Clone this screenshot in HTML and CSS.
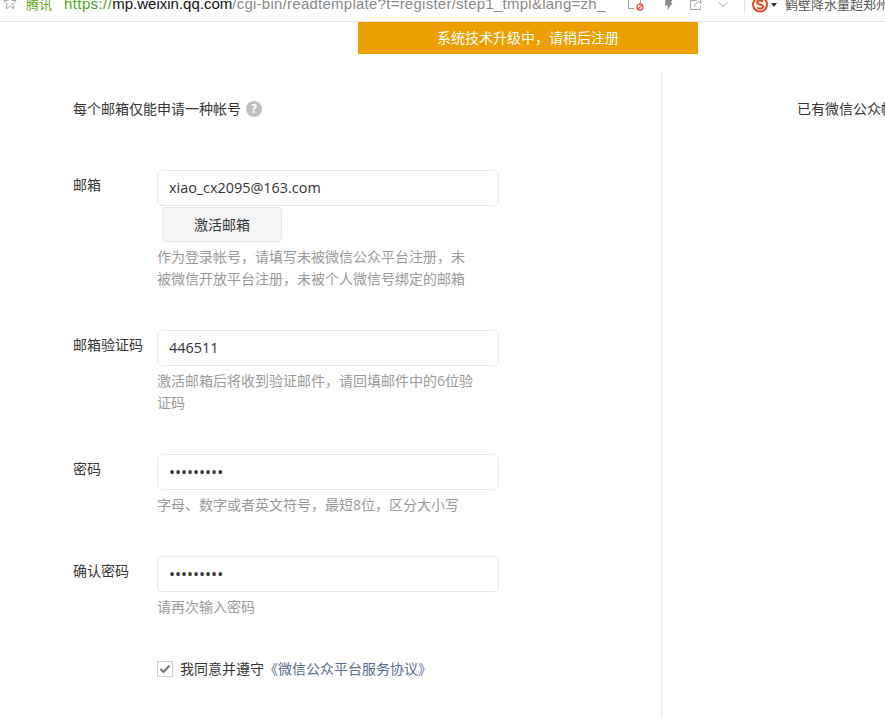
FILE: index.html
```html
<!DOCTYPE html>
<html lang="zh-CN">
<head>
<meta charset="utf-8">
<title>注册</title>
<link rel="stylesheet" href="styles.css">
</head>
<body>
<header class="browser-bar">
  <svg class="star" width="14" height="10" viewBox="0 0 14 10"><path d="M0.700 0.500H5.200L7 -4L8.800 0.500H13.300L9.700 3.600L11 9L7 6.200L3 9L4.300 3.600Z" fill="none" stroke="#a8a8a8"/></svg>
  <span class="tag">腾讯</span>
  <span class="url"><span class="scheme">https://</span><span class="host">mp.weixin.qq.com</span><span class="path">/cgi-bin/readtemplate?t=register/step1_tmpl&amp;lang=zh_</span></span>
  <svg class="icon-page" width="16" height="11" viewBox="0 0 16 11"><path d="M0.500 0V8.500H6M12.500 0V3" fill="none" stroke="#9a9a9a"/><circle cx="12" cy="7" r="3" fill="#fff" stroke="#ef4b4b" stroke-width="1.300"/><path d="M10 9L14 5" stroke="#ef4b4b" stroke-width="1.200"/></svg>
  <svg class="icon-bolt" width="9" height="11" viewBox="0 0 9 11"><path d="M1.500 0H8.500L6.800 3H8.500L3 10.500L4 5.500H1Z" fill="#8c8c8c"/></svg>
  <svg class="icon-share" width="13" height="10" viewBox="0 0 13 10"><path d="M7 0.500H0.500V9.500H10.500V6M4.500 6.500C5 3.500 7.500 1.500 11 1.500M9 -1.500L12 1.500L9 4.500" fill="none" stroke="#a6a6a6"/></svg>
  <svg class="icon-chevron" width="10" height="5" viewBox="0 0 10 5"><path d="M0.500 0.500L5 4.300L9.500 0.500" fill="none" stroke="#a6a6a6"/></svg>
  <span class="bar-sep"></span>
  <svg class="icon-sogou" width="16" height="13" viewBox="0 0 16 13"><circle cx="8" cy="4.500" r="7" fill="#fff" stroke="#ea4b24" stroke-width="2"/><path d="M11 1.500C8.500 0 5 0.500 5 2.500C5 5 11 4 11 6.500C11 8.800 7.500 9 4.800 7.500" fill="none" stroke="#ea4b24" stroke-width="2"/></svg>
  <span class="caret"></span>
  <span class="search-text">鹤壁降水量超郑州</span>
</header>

<div class="banner">系统技术升级中，请稍后注册</div>

<main class="page">
  <section class="form-col">
    <p class="intro">每个邮箱仅能申请一种帐号<span class="help">?</span></p>

    <div class="row row-first">
      <label class="label">邮箱</label>
      <div class="field">
        <input class="input input-text" type="text" value="xiao_cx2095@163.com" readonly>
        <button class="btn" type="button">激活邮箱</button>
        <p class="hint">作为登录帐号，请填写未被微信公众平台注册，未被微信开放平台注册，未被个人微信号绑定的邮箱</p>
      </div>
    </div>

    <div class="row">
      <label class="label">邮箱验证码</label>
      <div class="field">
        <input class="input input-text" type="text" value="446511" readonly>
        <p class="hint">激活邮箱后将收到验证邮件，请回填邮件中的6位验证码</p>
      </div>
    </div>

    <div class="row">
      <label class="label">密码</label>
      <div class="field">
        <input class="input input-pass" type="password" value="123456789" readonly>
        <p class="hint">字母、数字或者英文符号，最短8位，区分大小写</p>
      </div>
    </div>

    <div class="row">
      <label class="label">确认密码</label>
      <div class="field">
        <input class="input input-pass" type="password" value="123456789" readonly>
        <p class="hint">请再次输入密码</p>
      </div>
    </div>

    <div class="agree">
      <span class="check"><svg width="12" height="10" viewBox="0 0 12 10"><path d="M1.500 5L4.500 8L10.500 1.500" fill="none" stroke="#777" stroke-width="2"/></svg></span>
      <span>我同意并遵守<a class="link" href="#">《微信公众平台服务协议》</a></span>
    </div>
  </section>
  <aside class="side-col">
    <p class="side-text">已有微信公众帐号？立即登录</p>
  </aside>
</main>
</body>
</html>
```

FILE: styles.css
```css
* { box-sizing: border-box; }
html, body { margin: 0; padding: 0; }
body {
  width: 885px;
  height: 718px;
  overflow: hidden;
  background: #fff;
  color: #353535;
  font-family: "Open Sans", "Noto Sans CJK SC", sans-serif;
  font-size: 14px;
}
p { margin: 0; }

.browser-bar {
  display: flex;
  align-items: flex-start;
  height: 22px;
  border-bottom: 1px solid #e4e4e4;
  overflow: hidden;
  white-space: nowrap;
}
.star { flex: none; margin-left: 3px; }
.tag { flex: none; width: 26px; margin: -6px 0 0 9px; color: #5aa51e; font-size: 13px; line-height: 20px; }
.url {
  flex: none;
  width: 542px;
  height: 20px;
  margin: -6px 0 0 12px;
  overflow: hidden;
  color: #8a8a8a;
  font-family: "Liberation Sans", sans-serif;
  font-size: 15px;
  line-height: 20px;
}
.scheme { color: #4fa51e; letter-spacing: 0.4px; }
.host { color: #111; }
.path { letter-spacing: 0.25px; }
.icon-page { flex: none; margin-left: 22px; }
.icon-bolt { flex: none; margin-left: 20px; }
.icon-share { flex: none; margin-left: 17px; }
.icon-chevron { flex: none; margin: 2px 0 0 15px; }
.bar-sep { flex: none; width: 1px; height: 14px; margin-left: 16px; background: #e4e4e4; }
.icon-sogou { flex: none; margin-left: 7px; }
.caret { flex: none; width: 0; height: 0; margin: 3px 0 0 3px; border: 3px solid transparent; border-top: 4px solid #333; border-bottom: 0; }
.search-text { flex: none; margin: -6px 0 0 8px; color: #555; font-size: 13px; line-height: 20px; }

.banner {
  width: 340px;
  height: 32px;
  margin-left: 358px;
  background: #eba000;
  color: #fff;
  font-size: 14px;
  line-height: 32px;
  text-align: center;
}

.page {
  display: flex;
  margin-top: 18px;
  height: 646px;
}
.form-col { flex: none; width: 661px; padding: 25px 0 0 73px; }
.side-col { flex: 1; border-left: 1px solid #e7e7eb; padding: 25px 0 0 135px; overflow: hidden; white-space: nowrap; }
.intro, .side-text { display: flex; align-items: center; height: 24px; line-height: 24px; }
.side-text { color: #353535; }
.help {
  display: inline-block;
  width: 16px;
  height: 16px;
  margin-left: 5px;
  border-radius: 50%;
  background: #c0c0c0;
  color: #fff;
  font-size: 12px;
  font-weight: 700;
  line-height: 16px;
  text-align: center;
}

.row { display: flex; margin-top: 40px; }
.row-first { margin-top: 49px; }
.label { flex: none; width: 84px; padding-top: 4px; line-height: 22px; }
.field { flex: none; width: 342px; }
.input {
  display: block;
  width: 342px;
  height: 36px;
  padding: 0 11px;
  border: 1px solid #e7e7eb;
  border-radius: 5px;
  outline: 0;
  background: #fff;
  color: #353535;
  font-family: "Open Sans", "Noto Sans CJK SC", sans-serif;
}
.input-text { padding-bottom: 2px; font-size: 14.4px; }
.input-pass { font-size: 16px; }
.btn {
  display: block;
  width: 120px;
  height: 35px;
  margin: 1px 0 0 5px;
  padding: 0 0 2px;
  border: 1px solid #e4e8eb;
  border-radius: 3px;
  background: #f4f5f7;
  color: #353535;
  font-family: "Open Sans", "Noto Sans CJK SC", sans-serif;
  font-size: 14px;
}
.hint {
  width: 318px;
  margin-top: 4px;
  color: #9a9a9a;
  font-size: 14px;
  line-height: 22px;
}

.agree {
  display: flex;
  align-items: center;
  gap: 7px;
  height: 22px;
  margin: 40px 0 0 84px;
  line-height: 22px;
}
.check {
  display: flex;
  align-items: center;
  justify-content: center;
  width: 16px;
  height: 16px;
  border: 1px solid #cfcfcf;
  background: #fff;
}
.link { color: #576b95; text-decoration: none; }
```
